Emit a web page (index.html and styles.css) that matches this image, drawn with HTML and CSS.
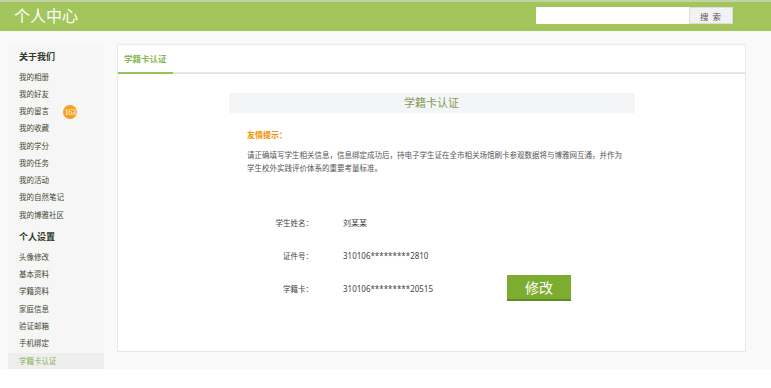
FILE: index.html
```html
<!DOCTYPE html>
<html>
<head>
	<meta charset="utf-8">
	<title>个人中心</title>
	<link rel="stylesheet" href="styles.css">
</head>
<body>
	<header class="topbar">
		<h1 class="site-title">个人中心</h1>
		<div class="search">
			<input type="text" class="search-input">
			<button class="search-btn">搜 索</button>
		</div>
	</header>

	<div class="page">
		<aside class="sidebar">
			<h3 class="side-title">关于我们</h3>
			<ul class="side-list">
				<li>我的相册</li>
				<li>我的好友</li>
				<li>我的留言 <span class="badge">163</span></li>
				<li>我的收藏</li>
				<li>我的学分</li>
				<li>我的任务</li>
				<li>我的活动</li>
				<li>我的自然笔记</li>
				<li>我的博雅社区</li>
			</ul>
			<h3 class="side-title second">个人设置</h3>
			<ul class="side-list long">
				<li>头像修改</li>
				<li>基本资料</li>
				<li>学籍资料</li>
				<li>家庭信息</li>
				<li>验证邮箱</li>
				<li>手机绑定</li>
				<li class="current">学籍卡认证</li>
			</ul>
		</aside>

		<main class="panel">
			<div class="tabs">
				<span class="tab active">学籍卡认证</span>
			</div>
			<div class="panel-body">
				<div class="box-title">学籍卡认证</div>
				<div class="notice">
					<p class="notice-title">友情提示：</p>
					<p class="notice-text">请正确填写学生相关信息，信息绑定成功后，持电子学生证在全市相关场馆刷卡参观数据将与博雅网互通，并作为学生校外实践评价体系的重要考量标准。</p>
				</div>
				<div class="card-form">
					<span class="label">学生姓名：</span>
					<span class="value">刘某某</span>
					<span></span>
					<span class="label">证件号：</span>
					<span class="value">310106*********2810</span>
					<span></span>
					<span class="label">学籍卡：</span>
					<span class="value">310106*********20515</span>
					<button class="edit-btn">修改</button>
				</div>
			</div>
		</main>
	</div>
</body>
</html>
```

FILE: styles.css
```css
html {
  background: #fff;
}

body {
  margin: 0;
  font-family: "Noto Sans", "Noto Sans CJK SC", sans-serif;
  color: #404a33;
}

/* header */
.topbar {
  height: 29px;
  border-top: 2px solid #c2d1a6;
  background: #a2c55c;
  display: flex;
  align-items: center;
  justify-content: space-between;
  padding: 0 38px 0 14px;
}

.site-title {
  margin: 0;
  font-size: 16px;
  font-weight: normal;
  color: #fff;
  line-height: 29px;
}

.search {
  display: flex;
  margin-top: -2px;
}

.search-input {
  width: 153px;
  height: 17px;
  box-sizing: border-box;
  border: none;
  background: #fff;
  padding: 0 4px;
  margin: 0;
}

.search-btn {
  width: 44px;
  height: 17px;
  border: 1px solid #dcdcdc;
  background: #f2f2f2;
  color: #555;
  font-family: "Noto Sans CJK SC", sans-serif;
  font-size: 8.5px;
  letter-spacing: 1px;
  padding: 0;
  margin: 0;
}

/* page */
.page {
  display: flex;
  align-items: flex-start;
  height: 325px;
  padding: 13px 0 0 8px;
  background: #f9f9f9;
}

.sidebar {
  width: 96px;
  height: 325px;
  background: #f6f6f6;
  flex: none;
}

.side-title {
  margin: 3px 0 1.5px;
  padding-left: 11px;
  font-size: 9px;
  line-height: 20px;
  font-weight: bold;
  color: #2f3827;
}

.side-title.second {
  margin-top: 3.25px;
}

.side-list {
  list-style: none;
  margin: 0;
  padding: 0;
}

.side-list li {
  height: 17.25px;
  line-height: 17.25px;
  padding-left: 11px;
  font-size: 7.5px;
  color: #404a33;
  display: flex;
  align-items: center;
}

.side-list.long li {
  height: 17.35px;
  line-height: 17.35px;
}

.side-list li.current {
  background: #eeeeee;
  color: #86b04f;
}

.badge {
  display: inline-block;
  width: 14px;
  height: 14px;
  line-height: 14px;
  border-radius: 50%;
  background: #f7a01c;
  color: #fff;
  text-align: center;
  font-family: "Liberation Serif", serif;
  font-size: 8.5px;
  letter-spacing: -0.5px;
  margin-left: 14px;
}

/* main panel */
.panel {
  margin-left: 13px;
  width: 627px;
  height: 306px;
  border: 1px solid #e8e8e8;
  background: #fff;
  flex: none;
}

.tabs {
  height: 27px;
  border-bottom: 2px solid #e6e6e6;
  display: flex;
}

.tab {
  padding: 0 6px;
  line-height: 27px;
  font-size: 8.5px;
  font-weight: bold;
  color: #8bb758;
}

.tab.active {
  border-bottom: 2px solid #96c45a;
  height: 27px;
}

.box-title {
  width: 406px;
  height: 20px;
  line-height: 20px;
  margin: 19px auto 0;
  background: #f4f5f7;
  text-align: center;
  font-size: 11px;
  color: #7f9c56;
}

.notice {
  margin-left: 129px;
  width: 375px;
}

.notice-title {
  margin: 16px 0 0;
  line-height: 12px;
  font-size: 8px;
  font-weight: bold;
  color: #f39100;
}

.notice-text {
  margin: 8.4px 0 0;
  line-height: 12.6px;
  font-size: 7.5px;
  color: #555;
}

.card-form {
  display: grid;
  grid-template-columns: 66px 134px 64px;
  grid-auto-rows: 32.6px;
  column-gap: 30px;
  align-items: center;
  margin: 32px 0 0 129px;
}

.label {
  text-align: right;
  font-size: 7.5px;
  color: #444;
}

.value {
  font-size: 8px;
  color: #444;
}

.edit-btn {
  width: 64px;
  height: 26px;
  border: none;
  border-bottom: 2px solid #5f8c22;
  background: #7cac30;
  color: #fff;
  font-family: "Noto Sans CJK SC", sans-serif;
  font-size: 14px;
  padding: 0;
  margin: 0;
}
```
